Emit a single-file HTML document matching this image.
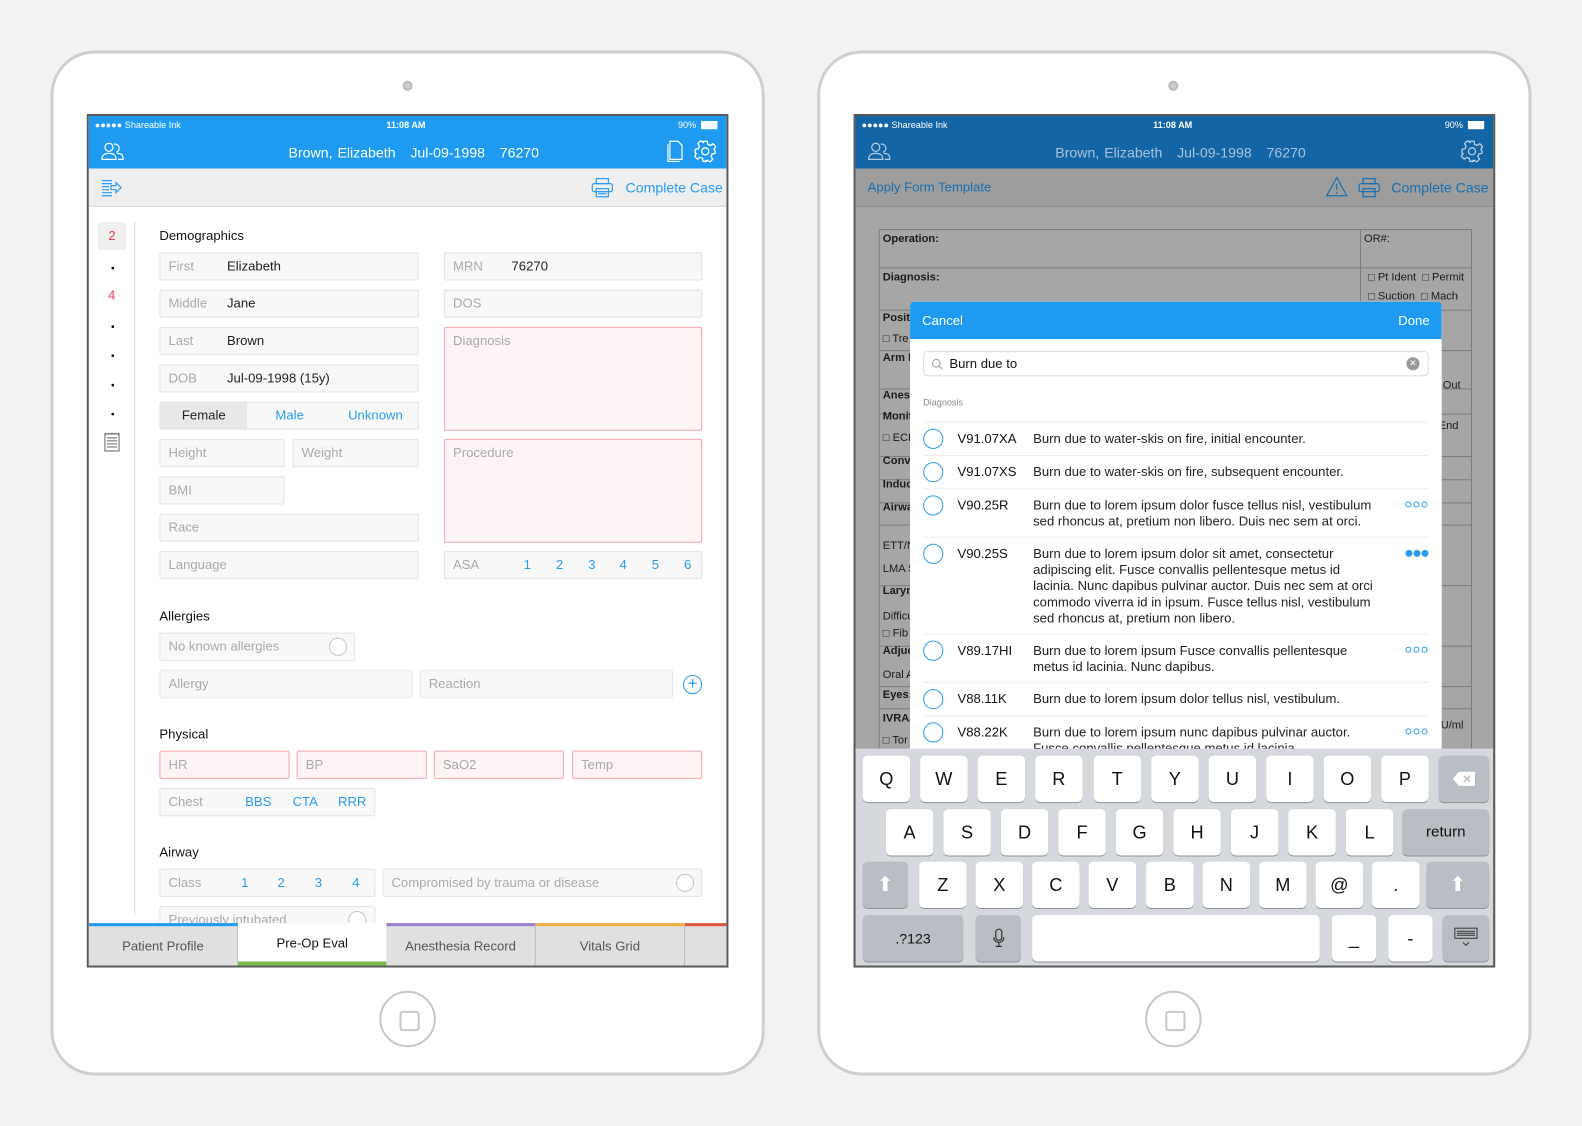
<!DOCTYPE html>
<html><head><meta charset="utf-8"><style>
*{box-sizing:border-box;margin:0;padding:0}
body{width:1582px;height:1126px;background:#f2f2f2;position:relative;overflow:hidden;font-family:"Liberation Sans",Arial,sans-serif;}
#w{position:absolute;left:0;top:0;width:1568px;height:1116px;transform:scale(1.0089);transform-origin:0 0}
.a{position:absolute}
.dev{position:absolute;width:708px;height:1016px;top:50px;border:3px solid #cfcfcf;border-radius:44px;background:#fff}
.cam{position:absolute;width:10px;height:10px;border-radius:50%;background:#ccc;border:2px solid #bbb}
.home{position:absolute;width:56px;height:56px;border-radius:50%;border:2px solid #c8c8c8}
.home:after{content:"";position:absolute;left:18px;top:18px;width:16px;height:16px;border:2px solid #c8c8c8;border-radius:3px}
.scr{position:absolute;top:113px;width:636px;height:846px;border:2px solid #5a5a5a;overflow:hidden;background:#fff}
.f{position:absolute;height:28px;border:1px solid #e3e3e3;background:#f8f8f8;border-radius:2px;font-size:13px;color:#aaa;line-height:26px;padding-left:8px;white-space:nowrap}
.f b{font-weight:normal;color:#222;position:absolute}
.pk{border-color:#f2a6ad;background:#fdf4f5}
.bl{color:#2a9cf0;position:absolute}
.lbl{position:absolute;font-size:13px;color:#111}
.rc{position:absolute;width:18px;height:18px;border-radius:50%;border:1px solid #c8c8c8;background:#fff}
.k{position:absolute;height:46px;background:#fff;border-radius:5px;box-shadow:0 1px 0 #8f9296;font-size:18px;text-align:center;line-height:46px;color:#111}
.kg{background:#b9bec4}
.fl{position:absolute;font-size:11px;font-weight:bold;color:#1b1b1b;font-family:"Liberation Sans Narrow","Liberation Sans",sans-serif}
.hl{position:absolute;height:1px;background:#7d7d7d}
.row{position:absolute;left:0;width:100%;border-top:1px solid #ececec}
.cir{position:absolute;width:20px;height:20px;border-radius:50%;border:1.5px solid #2a9cf0}
.code{position:absolute;left:34px;font-size:13px;color:#111}
.desc{position:absolute;left:109px;width:345px;font-size:13px;color:#222;line-height:16px}
.dots{position:absolute;left:478px;width:24px;height:8px}
.dots i{float:left;width:6px;height:6px;border-radius:50%;border:1.3px solid #2a9cf0;margin-right:2px}
.dots.full i{background:#2a9cf0;width:7px;height:7px;margin-right:1px}
</style></head><body><div id="w">

<!-- LEFT DEVICE -->
<div class="dev" style="left:50px"></div>
<div class="cam" style="left:399px;top:80px"></div>
<div class="home" style="left:376px;top:982px"></div>
<div class="scr" style="left:86px">
  <div class="a" style="left:0;top:0;width:632px;height:52px;background:#1e9bf0;color:#fff">
    <div class="a" style="left:6px;top:4px;font-size:9px">●●●●● Shareable Ink</div>
    <div class="a" style="left:295px;top:4px;font-size:9px;font-weight:bold">11:08 AM</div>
    <div class="a" style="left:584px;top:4px;font-size:9px">90%</div>
    <div class="a" style="left:607px;top:5px;width:16px;height:8px;border:1px solid #fff;background:#fff"></div>
    <svg class="a" style="left:12px;top:25px" width="24" height="20" viewBox="0 0 24 20" fill="none" stroke="#fff" stroke-width="1.2"><circle cx="8" cy="6" r="4"/><path d="M1 18c0-5 3-6 7-6s7 1 7 6z"/><path d="M13 3a4 4 0 1 1 2 8M16 12c4 0 6 1 6 6h-5"/></svg>
    <div class="a" style="left:198px;top:28px;font-size:14px;word-spacing:1px">Brown, Elizabeth &nbsp; Jul-09-1998 &nbsp; 76270</div>
    <svg class="a" style="left:572px;top:24px" width="18" height="22" viewBox="0 0 18 22" fill="none" stroke="#fff" stroke-width="1.2"><path d="M4 1h8l4 4v14H4z"/><path d="M2 4v17h12"/></svg>
    <svg class="a" style="left:600px;top:24px" width="22" height="22" viewBox="0 0 22 22" fill="none" stroke="#fff" stroke-width="1.3"><circle cx="11" cy="11" r="3.5"/><path d="M9 1h4l.6 3 2.5 1.2 2.6-1.7 2.8 2.8-1.7 2.6L21 11.3v0l-.2 1.7-3 .6-1 2.5 1.7 2.6-2.8 2.8-2.6-1.7-2.5 1L13 21H9l-.6-3-2.5-1-2.6 1.7-2.8-2.8 1.7-2.6L1.2 13 1 11l.2-2 3-.6 1-2.5L3.6 3.3 6.4.5 9 2.200z"/></svg>
  </div>
  <div class="a" style="left:0;top:52px;width:632px;height:38px;background:#efefef;border-bottom:1px solid #d4d4d4">
    <svg class="a" style="left:12px;top:10px" width="22" height="18" viewBox="0 0 22 18" fill="none" stroke="#2a9cf0" stroke-width="1.2"><path d="M1 2h10M1 5h10M1 8h7M1 11h7M1 14h10M1 17h10"/><path d="M10 7h5V4l5 5-5 5v-3h-5z"/></svg>
    <svg class="a" style="left:498px;top:9px" width="22" height="20" viewBox="0 0 22 20" fill="none" stroke="#2a9cf0" stroke-width="1.2"><rect x="5" y="1" width="12" height="5"/><rect x="1" y="6" width="20" height="8" rx="2"/><rect x="5" y="11" width="12" height="8"/><path d="M7 14h8M7 16h8"/></svg>
    <div class="a" style="left:532px;top:11px;font-size:14px;color:#2a9cf0">Complete Case</div>
  </div>
  <div class="a" style="left:9px;top:105px;width:28px;height:28px;background:#efefef;border-radius:3px;color:#e5434f;font-size:13px;text-align:center;line-height:28px">2</div>
  <div class="a" style="left:22px;top:146px;font-size:10px">•</div>
  <div class="a" style="left:19px;top:170px;font-size:13px;color:#e5434f">4</div>
  <div class="a" style="left:22px;top:204px;font-size:10px">•</div>
  <div class="a" style="left:22px;top:233px;font-size:10px">•</div>
  <div class="a" style="left:22px;top:262px;font-size:10px">•</div>
  <div class="a" style="left:22px;top:291px;font-size:10px">•</div>
  <svg class="a" style="left:15px;top:313px" width="16" height="20" viewBox="0 0 16 20" fill="none" stroke="#666" stroke-width="1"><rect x="1" y="2" width="14" height="17"/><path d="M3 6h10M3 9h10M3 12h10M3 15h10M2 1v2M5 1v2M8 1v2M11 1v2M14 1v2"/></svg>
  <div class="a" style="left:45px;top:105px;width:1px;height:687px;background:#ddd"></div>

  <div class="lbl" style="left:70px;top:111px">Demographics</div>
  <div class="f" style="left:70px;top:135px;width:257px">First<b style="left:66px">Elizabeth</b></div>
  <div class="f" style="left:70px;top:172px;width:257px">Middle<b style="left:66px">Jane</b></div>
  <div class="f" style="left:70px;top:209px;width:257px">Last<b style="left:66px">Brown</b></div>
  <div class="f" style="left:70px;top:246px;width:257px">DOB<b style="left:66px">Jul-09-1998 (15y)</b></div>
  <div class="f" style="left:70px;top:283px;width:257px;padding:0"><div class="a" style="left:0;top:0;width:86px;height:26px;background:#e8e8e8;color:#222;text-align:center">Female</div><span class="bl" style="left:114px">Male</span><span class="bl" style="left:186px">Unknown</span></div>
  <div class="f" style="left:70px;top:320px;width:124px">Height</div>
  <div class="f" style="left:202px;top:320px;width:125px">Weight</div>
  <div class="f" style="left:70px;top:357px;width:124px">BMI</div>
  <div class="f" style="left:70px;top:394px;width:257px">Race</div>
  <div class="f" style="left:70px;top:431px;width:257px">Language</div>
  <div class="f" style="left:352px;top:135px;width:256px">MRN<b style="left:66px">76270</b></div>
  <div class="f" style="left:352px;top:172px;width:256px">DOS</div>
  <div class="f pk" style="left:352px;top:209px;width:256px;height:103px">Diagnosis</div>
  <div class="f pk" style="left:352px;top:320px;width:256px;height:103px">Procedure</div>
  <div class="f" style="left:352px;top:431px;width:256px">ASA<span class="bl" style="left:78px">1</span><span class="bl" style="left:110px">2</span><span class="bl" style="left:142px">3</span><span class="bl" style="left:173px">4</span><span class="bl" style="left:205px">5</span><span class="bl" style="left:237px">6</span></div>

  <div class="lbl" style="left:70px;top:488px">Allergies</div>
  <div class="f" style="left:70px;top:512px;width:194px">No known allergies<div class="rc" style="left:167px;top:4px"></div></div>
  <div class="f" style="left:70px;top:549px;width:251px">Allergy</div>
  <div class="f" style="left:328px;top:549px;width:251px">Reaction</div>
  <div class="a" style="left:589px;top:554px;width:19px;height:19px;border:1.3px solid #2a9cf0;border-radius:50%;color:#2a9cf0;text-align:center;line-height:16px;font-size:17px">+</div>

  <div class="lbl" style="left:70px;top:605px">Physical</div>
  <div class="f pk" style="left:70px;top:629px;width:129px">HR</div>
  <div class="f pk" style="left:206px;top:629px;width:129px">BP</div>
  <div class="f pk" style="left:342px;top:629px;width:129px">SaO2</div>
  <div class="f pk" style="left:479px;top:629px;width:129px">Temp</div>
  <div class="f" style="left:70px;top:666px;width:214px">Chest<span class="bl" style="left:84px">BBS</span><span class="bl" style="left:131px">CTA</span><span class="bl" style="left:176px">RRR</span></div>

  <div class="lbl" style="left:70px;top:722px">Airway</div>
  <div class="f" style="left:70px;top:746px;width:214px">Class<span class="bl" style="left:80px">1</span><span class="bl" style="left:116px">2</span><span class="bl" style="left:153px">3</span><span class="bl" style="left:190px">4</span></div>
  <div class="f" style="left:291px;top:746px;width:317px">Compromised by trauma or disease<div class="rc" style="left:290px;top:4px"></div></div>
  <div class="f" style="left:70px;top:783px;width:214px">Previously intubated<div class="rc" style="left:186px;top:4px"></div></div>

  <div class="a" style="left:0;top:800px;width:632px;height:42px;background:#e0e0e0;font-size:13px;color:#555">
    <div class="a" style="left:0;top:0;width:148px;height:42px;border-top:3px solid #1e9bf0;border-right:1px solid #bbb;text-align:center;line-height:40px">Patient Profile</div>
    <div class="a" style="left:148px;top:0;width:147px;height:42px;background:#fff;border-bottom:4px solid #7cbb4a;color:#111;text-align:center;line-height:40px">Pre-Op Eval</div>
    <div class="a" style="left:295px;top:0;width:148px;height:42px;border-top:3px solid #9b7fd1;border-right:1px solid #bbb;text-align:center;line-height:40px">Anesthesia Record</div>
    <div class="a" style="left:443px;top:0;width:148px;height:42px;border-top:3px solid #f0b040;border-right:1px solid #bbb;text-align:center;line-height:40px">Vitals Grid</div>
    <div class="a" style="left:591px;top:0;width:41px;height:42px;border-top:3px solid #e0553d"></div>
  </div>
</div>

<!-- RIGHT DEVICE -->
<div class="dev" style="left:810px"></div>
<div class="cam" style="left:1158px;top:80px"></div>
<div class="home" style="left:1135px;top:982px"></div>
<div class="scr" style="left:846px;background:#a6a6a6">
  <div class="a" style="left:0;top:0;width:632px;height:52px;background:#1465a6;color:#fff">
    <div class="a" style="left:6px;top:4px;font-size:9px">●●●●● Shareable Ink</div>
    <div class="a" style="left:295px;top:4px;font-size:9px;font-weight:bold">11:08 AM</div>
    <div class="a" style="left:584px;top:4px;font-size:9px">90%</div>
    <div class="a" style="left:607px;top:5px;width:16px;height:8px;border:1px solid #fff;background:#fff"></div>
    <svg class="a" style="left:12px;top:25px" width="24" height="20" viewBox="0 0 24 20" fill="none" stroke="#b8cde0" stroke-width="1.2"><circle cx="8" cy="6" r="4"/><path d="M1 18c0-5 3-6 7-6s7 1 7 6z"/><path d="M13 3a4 4 0 1 1 2 8M16 12c4 0 6 1 6 6h-5"/></svg>
    <div class="a" style="left:198px;top:28px;font-size:14px;color:#a9c4de;word-spacing:1px">Brown, Elizabeth &nbsp; Jul-09-1998 &nbsp; 76270</div>
    <svg class="a" style="left:600px;top:24px" width="22" height="22" viewBox="0 0 22 22" fill="none" stroke="#b8cde0" stroke-width="1.3"><circle cx="11" cy="11" r="3.5"/><path d="M9 1h4l.6 3 2.5 1.2 2.6-1.7 2.8 2.8-1.7 2.6L21 11.3l-.2 1.7-3 .6-1 2.5 1.7 2.6-2.8 2.8-2.6-1.7-2.5 1L13 21H9l-.6-3-2.5-1-2.6 1.7-2.8-2.8 1.7-2.6L1.2 13 1 11l.2-2 3-.6 1-2.5L3.6 3.3 6.4.5 9 2.2z"/></svg>
  </div>
  <div class="a" style="left:0;top:52px;width:632px;height:38px;background:#9d9d9d;border-bottom:1px solid #8a8a8a">
    <div class="a" style="left:12px;top:11px;font-size:13px;color:#1a6fb0">Apply Form Template</div>
    <svg class="a" style="left:466px;top:8px" width="22" height="20" viewBox="0 0 22 20" fill="none" stroke="#1a6fb0" stroke-width="1.2"><path d="M11 1L21 19H1z"/><path d="M11 7v6M11 15v2"/></svg>
    <svg class="a" style="left:498px;top:9px" width="22" height="20" viewBox="0 0 22 20" fill="none" stroke="#1a6fb0" stroke-width="1.2"><rect x="5" y="1" width="12" height="5"/><rect x="1" y="6" width="20" height="8" rx="2"/><rect x="5" y="11" width="12" height="8"/></svg>
    <div class="a" style="left:531px;top:11px;font-size:14px;color:#1a6fb0">Complete Case</div>
  </div>
  <div class="a" style="left:23px;top:112px;width:588px;height:640px;border:1px solid #7d7d7d"></div>
  <div class="a" style="left:500px;top:112px;width:1px;height:80px;background:#7d7d7d"></div>
  <div class="hl" style="left:23px;top:150px;width:588px"></div>
  <div class="hl" style="left:23px;top:192px;width:588px"></div>
  <div class="hl" style="left:23px;top:232px;width:588px"></div>
  <div class="hl" style="left:23px;top:270px;width:588px"></div>
  <div class="hl" style="left:23px;top:295px;width:588px"></div>
  <div class="hl" style="left:23px;top:337px;width:588px"></div>
  <div class="hl" style="left:23px;top:360px;width:588px"></div>
  <div class="hl" style="left:23px;top:383px;width:588px"></div>
  <div class="hl" style="left:23px;top:405px;width:588px"></div>
  <div class="hl" style="left:23px;top:465px;width:588px"></div>
  <div class="hl" style="left:23px;top:525px;width:588px"></div>
  <div class="hl" style="left:23px;top:565px;width:588px"></div>
  <div class="hl" style="left:23px;top:587px;width:588px"></div>
  <div class="fl" style="left:27px;top:116px">Operation:</div>
  <div class="fl" style="left:504px;top:116px;font-weight:normal">OR#:</div>
  <div class="fl" style="left:27px;top:154px">Diagnosis:</div>
  <div class="fl" style="left:508px;top:154px;font-weight:normal">□ Pt Ident &nbsp;□ Permit</div>
  <div class="fl" style="left:508px;top:173px;font-weight:normal">□ Suction &nbsp;□ Mach</div>
  <div class="fl" style="left:27px;top:194px">Positi</div>
  <div class="fl" style="left:27px;top:215px;font-weight:normal">□ Tre</div>
  <div class="fl" style="left:27px;top:234px">Arm F</div>
  <div class="fl" style="left:27px;top:271px">Anest</div>
  <div class="fl" style="left:582px;top:261px;font-weight:normal">Out</div>
  <div class="fl" style="left:27px;top:292px">Monit</div>
  <div class="fl" style="left:578px;top:301px;font-weight:normal">End</div>
  <div class="fl" style="left:27px;top:313px;font-weight:normal">□ ECI</div>
  <div class="fl" style="left:27px;top:336px">Conve</div>
  <div class="fl" style="left:27px;top:359px">Induc</div>
  <div class="fl" style="left:27px;top:382px">Airwa</div>
  <div class="fl" style="left:27px;top:420px;font-weight:normal">ETT/N</div>
  <div class="fl" style="left:27px;top:443px;font-weight:normal">LMA S</div>
  <div class="fl" style="left:27px;top:465px">Laryn</div>
  <div class="fl" style="left:27px;top:490px;font-weight:normal">Difficu</div>
  <div class="fl" style="left:27px;top:507px;font-weight:normal">□ Fib</div>
  <div class="fl" style="left:27px;top:524px">Adjuc</div>
  <div class="fl" style="left:27px;top:548px;font-weight:normal">Oral A</div>
  <div class="fl" style="left:27px;top:568px">Eyes:</div>
  <div class="fl" style="left:27px;top:591px">IVRA/</div>
  <div class="fl" style="left:580px;top:598px;font-weight:normal">U/ml</div>
  <div class="fl" style="left:27px;top:613px;font-weight:normal">□ Tor</div>

  <div class="a" style="left:54px;top:184px;width:527px;height:445px;background:#fff;border-radius:4px 4px 0 0;overflow:hidden">
    <div class="a" style="left:0;top:0;width:527px;height:37px;background:#1e9bf0;color:#fff;font-size:13px">
      <div class="a" style="left:12px;top:11px">Cancel</div><div class="a" style="right:12px;top:11px">Done</div>
    </div>
    <div class="a" style="left:13px;top:49px;width:501px;height:25px;border:1px solid #ddd;border-radius:4px;font-size:13px;color:#111">
      <svg class="a" style="left:7px;top:6px" width="12" height="12" viewBox="0 0 12 12" fill="none" stroke="#aaa" stroke-width="1.2"><circle cx="5" cy="5" r="3.8"/><path d="M8 8l3 3"/></svg>
      <div class="a" style="left:25px;top:4px">Burn due to</div>
      <div class="a" style="right:8px;top:5px;width:13px;height:13px;border-radius:50%;background:#999;color:#fff;font-size:9px;text-align:center;line-height:13px">✕</div>
    </div>
    <div class="a" style="left:13px;top:95px;font-size:9px;color:#888">Diagnosis</div>
    <div class="a" style="left:13px;top:119px;width:501px;height:330px">
      <div class="row" style="top:0"></div>
      <div class="cir" style="left:0;top:7px"></div><div class="code" style="top:9px">V91.07XA</div><div class="desc" style="top:9px">Burn due to water-skis on fire, initial encounter.</div>
      <div class="row" style="top:33px"></div>
      <div class="cir" style="left:0;top:40px"></div><div class="code" style="top:42px">V91.07XS</div><div class="desc" style="top:42px">Burn due to water-skis on fire, subsequent encounter.</div>
      <div class="row" style="top:66px"></div>
      <div class="cir" style="left:0;top:73px"></div><div class="code" style="top:75px">V90.25R</div><div class="desc" style="top:75px">Burn due to lorem ipsum dolor fusce tellus nisl, vestibulum sed rhoncus at, pretium non libero. Duis nec sem at orci.</div><div class="dots" style="top:79px"><i></i><i></i><i></i></div>
      <div class="row" style="top:114px"></div>
      <div class="cir" style="left:0;top:121px"></div><div class="code" style="top:123px">V90.25S</div><div class="desc" style="top:123px">Burn due to lorem ipsum dolor sit amet, consectetur adipiscing elit. Fusce convallis pellentesque metus id lacinia. Nunc dapibus pulvinar auctor. Duis nec sem at orci commodo viverra id in ipsum. Fusce tellus nisl, vestibulum sed rhoncus at, pretium non libero.</div><div class="dots full" style="top:127px"><i></i><i></i><i></i></div>
      <div class="row" style="top:210px"></div>
      <div class="cir" style="left:0;top:217px"></div><div class="code" style="top:219px">V89.17HI</div><div class="desc" style="top:219px">Burn due to lorem ipsum Fusce convallis pellentesque metus id lacinia. Nunc dapibus.</div><div class="dots" style="top:223px"><i></i><i></i><i></i></div>
      <div class="row" style="top:258px"></div>
      <div class="cir" style="left:0;top:265px"></div><div class="code" style="top:267px">V88.11K</div><div class="desc" style="top:267px">Burn due to lorem ipsum dolor tellus nisl, vestibulum.</div>
      <div class="row" style="top:291px"></div>
      <div class="cir" style="left:0;top:298px"></div><div class="code" style="top:300px">V88.22K</div><div class="desc" style="top:300px">Burn due to lorem ipsum nunc dapibus pulvinar auctor. Fusce convallis pellentesque metus id lacinia.</div><div class="dots" style="top:304px"><i></i><i></i><i></i></div>
    </div>
  </div>

  <div class="a" style="left:0;top:627px;width:632px;height:217px;background:#d5d8dc">
    <div class="k" style="left:7px;top:7px;width:47px">Q</div>
    <div class="k" style="left:64px;top:7px;width:47px">W</div>
    <div class="k" style="left:121px;top:7px;width:47px">E</div>
    <div class="k" style="left:178px;top:7px;width:47px">R</div>
    <div class="k" style="left:236px;top:7px;width:47px">T</div>
    <div class="k" style="left:293px;top:7px;width:47px">Y</div>
    <div class="k" style="left:350px;top:7px;width:47px">U</div>
    <div class="k" style="left:407px;top:7px;width:47px">I</div>
    <div class="k" style="left:464px;top:7px;width:47px">O</div>
    <div class="k" style="left:521px;top:7px;width:47px">P</div>
    <div class="k kg" style="left:578px;top:7px;width:50px"><svg width="24" height="16" viewBox="0 0 24 16" style="margin-top:15px"><path d="M7 1h16v14H7L1 8z" fill="#fff"/><path d="M12 5l6 6M18 5l-6 6" stroke="#b9bec4" stroke-width="1.5"/></svg></div>
    <div class="k" style="left:30px;top:60px;width:47px">A</div>
    <div class="k" style="left:87px;top:60px;width:47px">S</div>
    <div class="k" style="left:144px;top:60px;width:47px">D</div>
    <div class="k" style="left:201px;top:60px;width:47px">F</div>
    <div class="k" style="left:258px;top:60px;width:47px">G</div>
    <div class="k" style="left:315px;top:60px;width:47px">H</div>
    <div class="k" style="left:372px;top:60px;width:47px">J</div>
    <div class="k" style="left:429px;top:60px;width:47px">K</div>
    <div class="k" style="left:486px;top:60px;width:47px">L</div>
    <div class="k kg" style="left:542px;top:60px;width:86px;font-size:15px">return</div>
    <div class="k kg" style="left:7px;top:112px;width:45px;font-size:20px;color:#fff">⬆</div>
    <div class="k" style="left:63px;top:112px;width:47px">Z</div>
    <div class="k" style="left:119px;top:112px;width:47px">X</div>
    <div class="k" style="left:175px;top:112px;width:47px">C</div>
    <div class="k" style="left:231px;top:112px;width:47px">V</div>
    <div class="k" style="left:288px;top:112px;width:47px">B</div>
    <div class="k" style="left:344px;top:112px;width:47px">N</div>
    <div class="k" style="left:400px;top:112px;width:47px">M</div>
    <div class="k" style="left:456px;top:112px;width:47px">@</div>
    <div class="k" style="left:512px;top:112px;width:47px">.</div>
    <div class="k kg" style="left:566px;top:112px;width:62px;font-size:20px;color:#fff">⬆</div>
    <div class="k kg" style="left:7px;top:165px;width:100px;font-size:14px">.?123</div>
    <div class="k kg" style="left:119px;top:165px;width:45px"><svg width="12" height="20" viewBox="0 0 12 20" style="margin-top:13px" fill="none" stroke="#333" stroke-width="1.2"><rect x="3" y="1" width="6" height="11" rx="3"/><path d="M1 9a5 5 0 0 0 10 0M6 14v4M3 18h6"/></svg></div>
    <div class="k" style="left:175px;top:165px;width:285px"></div>
    <div class="k" style="left:472px;top:165px;width:44px">_</div>
    <div class="k" style="left:528px;top:165px;width:44px">-</div>
    <div class="k kg" style="left:582px;top:165px;width:46px"><svg width="24" height="20" viewBox="0 0 24 20" style="margin-top:12px" fill="none" stroke="#333" stroke-width="1"><rect x="1" y="1" width="22" height="10"/><path d="M3 4h18M3 6h18M3 8h18M9 15l3 3 3-3"/></svg></div>
  </div>
</div>
</div></body></html>
